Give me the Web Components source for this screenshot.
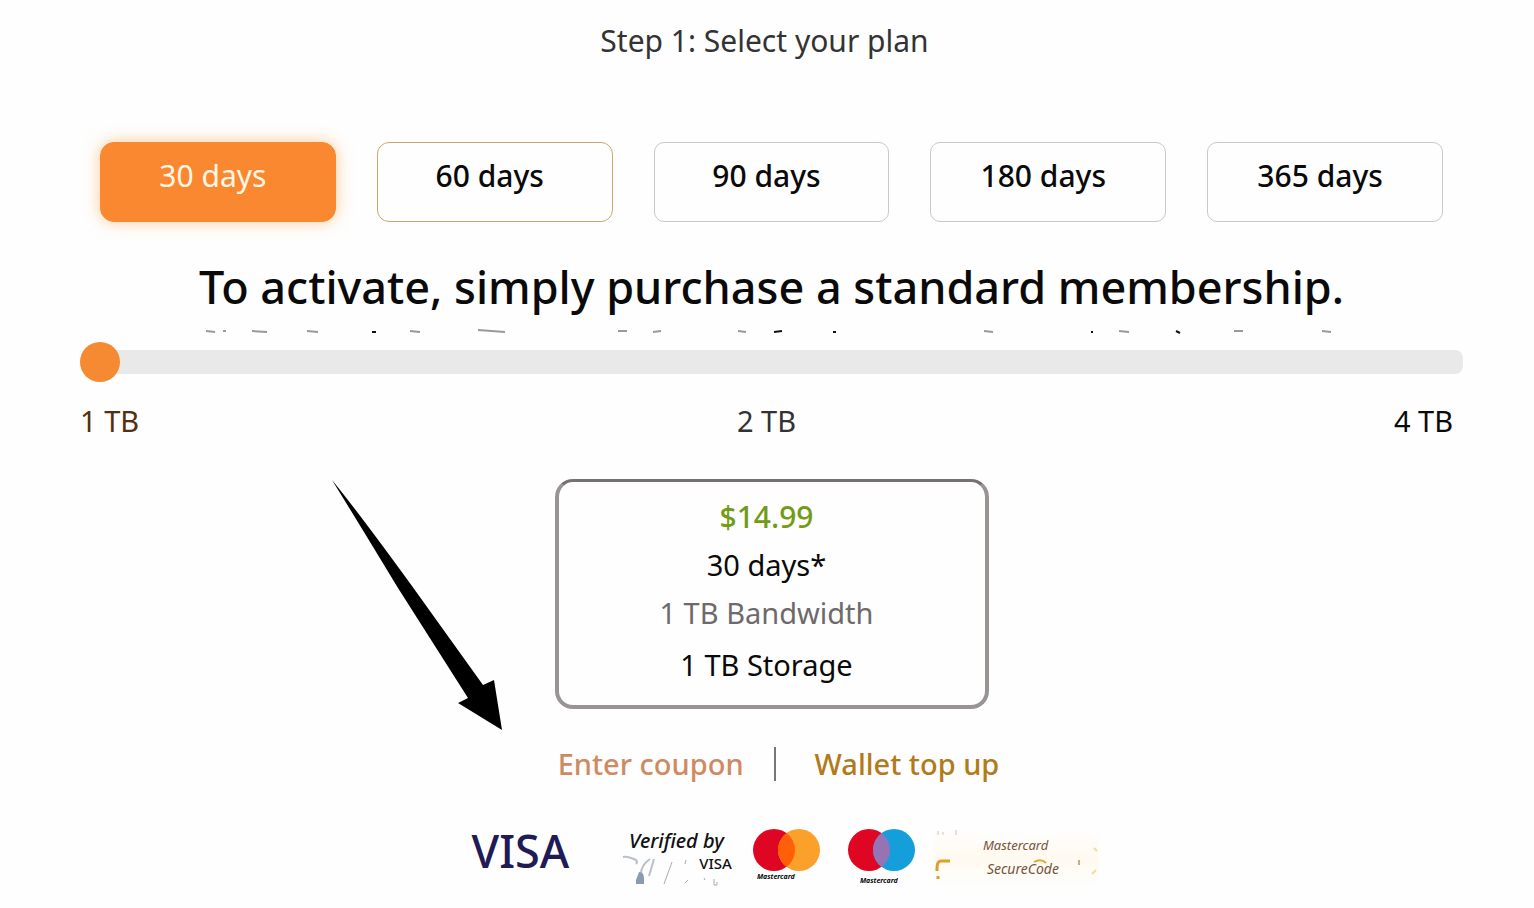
<!DOCTYPE html>
<html lang="en">
<head>
<meta charset="utf-8">
<meta name="viewport" content="width=device-width, initial-scale=1">
<title>Select your plan</title>
<style>
body { margin: 0; background: #fefefe; color: #0a0a0a; font: 30px/40px "Noto Sans", "Open Sans", sans-serif; }
</style>
</head>
<body>
<plan-page></plan-page>
<script>
function define(name, html) {
  const template = document.createElement('template');
  template.innerHTML = html;
  customElements.define(name, class extends HTMLElement {
    constructor() {
      super();
      this.attachShadow({ mode: 'open' }).append(template.content.cloneNode(true));
    }
  });
}

define('plan-option', `
<style>
:host { display: block; }
button { box-sizing: border-box; width: 100%; height: 80px; padding: 0 10px 12px 0; font: inherit; font-weight: 500; color: #0a0a0a;
  background: #fefefe; border: 1px solid #c9c9c9; border-radius: 10px; cursor: pointer; }
:host([tone="gold"]) button { border-color: #c9aa6c; border-radius: 12px; }
:host([selected]) button { color: #fff7e6; background: #f98830; border-color: #f98830; border-radius: 14px; font-weight: 400;
  box-shadow: 0 0 16px rgba(249, 170, 80, .6); }
</style>
<button type="button"><slot></slot></button>`);

define('plan-picker', `
<style>
:host { display: grid; grid-template-columns: repeat(5, 1fr); gap: 41px; padding: 0 20px; }
</style>
<slot></slot>`);

define('storage-slider', `
<style>
:host { display: block; }
input { appearance: none; display: block; width: 100%; height: 40px; margin: 0; background: none; }
input::-webkit-slider-runnable-track { height: 24px; background: #e9e9e9; border-radius: 12px 8px 8px 12px; }
input::-webkit-slider-thumb { appearance: none; width: 40px; height: 40px; margin-top: -8px; border-radius: 50%; background: #f68a33; }
.marks { display: flex; justify-content: space-between; padding: 19px 10px 0 0; font-size: 29px; }
.marks :first-child { color: #54300f; }
.marks :nth-child(2) { color: #333; }
</style>
<input type="range" min="1" max="4" value="1" aria-label="Storage in TB">
<div class="marks"><span>1 TB</span><span>2 TB</span><span>4 TB</span></div>`);

define('text-remnants', `
<style>
:host { display: block; }
svg { display: block; width: 100%; height: 5px; }
</style>
<svg viewBox="0 0 1383 5" preserveAspectRatio="none" fill="none" stroke-width="2" aria-hidden="true">
<path stroke="#999" d="M126 2l9 1M143 2h3M172 2l15 1M227 2l11 1M330 2l10 1M398 1l27 2M538 2h9M573 3l8-1M658 2l8 1M904 2l9 1M1039 2l10 1M1154 2h9M1242 2l9 1"/>
<path stroke="#111" d="M292 3h4M694 3l8-1M753 3h3M1011 3h2M1096 2l4 2"/>
</svg>`);

define('plan-summary', `
<style>
:host { box-sizing: border-box; display: block; width: 434px; height: 230px; margin: 0 auto; padding: 15px 10px 0 0; text-align: center;
  border: 4px solid #999393; border-top: 3px solid #777070; border-radius: 18px; background: #fefefe; }
p { margin: 0 0 8px; font-size: 29px; }
.price { color: #729b16; font-size: 30px; font-weight: 500; }
.bandwidth { color: #6e6a6c; margin-bottom: 12px; }
</style>
<p class="price">$14.99</p>
<p>30 days*</p>
<p class="bandwidth">1 TB Bandwidth</p>
<p>1 TB Storage</p>`);

define('plan-links', `
<style>
:host { display: flex; justify-content: center; align-items: center; gap: 30px; padding-left: 14px; }
a { color: #cf8a63; text-decoration: none; font-size: 29px; font-weight: 500; }
a.wallet { color: #b37a1c; margin-left: 9px; }
i { width: 2px; height: 34px; background: #777; }
</style>
<a href="#coupon">Enter coupon</a><i></i><a class="wallet" href="#wallet">Wallet top up</a>`);

define('card-circles', `
<style>
:host { display: block; width: 68px; font: italic bold 7px/10px "Noto Sans", sans-serif; }
svg { display: block; width: 68px; height: 44px; }
span { display: block; padding-left: 5px; }
:host([kind="maestro"]) span { padding: 4px 0 0 13px; }
.right, .overlap { fill: #faa02b; }
.overlap { fill: #ff5f08; }
:host([kind="maestro"]) .right { fill: #149fdb; }
:host([kind="maestro"]) .overlap { fill: #9673b5; }
</style>
<svg viewBox="0 0 68 44" aria-hidden="true"><circle cx="22" cy="22" r="21" fill="#df0623"/><circle class="right" cx="47" cy="22" r="21"/><path class="overlap" d="M34.500 5.100A21 21 0 0 1 34.500 38.900A21 21 0 0 1 34.500 5.100Z"/></svg>
<span><slot></slot></span>`);

define('payment-logos', `
<style>
:host { display: flex; align-items: flex-start; width: 656px; margin: 0 auto; font-style: italic; }
.visa { width: 150px; padding-left: 28px; box-sizing: border-box; font: 500 45px/46px "Noto Sans", sans-serif; color: #211b55; }
.verified { position: relative; box-sizing: border-box; width: 159px; padding: 2px 28px 0 20px; display: flex; flex-direction: column; align-items: flex-end; color: #101014; }
.verified b { font: italic 500 20px/22px "Noto Sans", sans-serif; white-space: nowrap; }
.verified small { margin-right: -8px; font: 500 15px/22px "Noto Sans", sans-serif; }
.verified svg { position: absolute; left: 18px; top: 0; width: 120px; height: 64px; }
card-circles { margin-right: 27px; }
.secure { position: relative; width: 166px; height: 60px; margin-left: -8px; background: linear-gradient(#fefefe, #fffaf0, #fefefe); color: #73533a; font-size: 13px; line-height: 24px; }
.secure svg { position: absolute; inset: 0; width: 166px; height: 60px; }
.secure div { padding: 5px 0 0 49px; }
.secure span { display: block; }
.secure span + span { padding-left: 4px; font-size: 14px; }
</style>
<div class="visa">VISA</div>
<div class="verified">
<svg viewBox="0 0 120 64" aria-hidden="true" fill="none"><path stroke="#b9c0ca" stroke-width="2" d="M12 29q4-1 13 3q2 2 0 4M39 31q-9 6-9 15M43 31l-5 17"/><path fill="#8d9bb0" d="M28 44q5 0 5 6v6h-8v-4z"/><path stroke="#aaa" d="M61 34l-8 22M75 32l-1 4M77 52l-3 3M93 50l1 2M103 51v6h3v-3"/></svg>
<b>Verified by</b><small>VISA</small>
</div>
<card-circles>Mastercard</card-circles>
<card-circles kind="maestro">Mastercard</card-circles>
<div class="secure">
<svg viewBox="0 0 166 60" aria-hidden="true" fill="none"><path stroke="#d9a02b" stroke-width="3" d="M16 33h-9q-4 0-4 7v3M4 48v3"/><path stroke="#e6a735" stroke-width="2" d="M100 34q7-4 12 1"/><path stroke="#d5c4b4" d="M4 3v4M9 4v3M22 2v5"/><path stroke="#d9a48d" stroke-width="2" d="M145 32v5"/><path stroke="#f1dba5" stroke-width="2" d="M160 20l3 3M158 46l4-4"/></svg>
<div><span>Mastercard</span><span>SecureCode</span></div>
</div>`);

define('pointer-arrow', `
<style>
:host { position: absolute; left: 252px; top: 0; width: 172px; height: 252px; pointer-events: none; }
svg { display: block; width: 172px; height: 252px; }
</style>
<svg viewBox="0 0 172 252" aria-hidden="true"><path d="M0 1Q27 34 80 107L151 206L162 201L170 251L126 224L136 219L66 109Q26 43 0 1Z"/></svg>`);

define('plan-page', `
<style>
:host { display: block; padding: 21px 71px 20px 80px; }
h1, h2 { margin: 0; text-align: center; }
h1 { padding-right: 14px; font-size: 30px; font-weight: 400; line-height: 40px; color: #333; }
plan-picker { margin-top: 81px; }
h2 { margin-top: 35px; font-size: 45px; font-weight: 500; line-height: 60px; white-space: nowrap; }
text-remnants { margin-top: 12px; }
storage-slider { margin-top: 8px; }
.summary { position: relative; margin-top: 38px; }
plan-links { margin-top: 35px; }
payment-logos { margin-top: 44px; }
</style>
<h1>Step 1: Select your plan</h1>
<plan-picker>
<plan-option selected>30 days</plan-option>
<plan-option tone="gold">60 days</plan-option>
<plan-option>90 days</plan-option>
<plan-option>180 days</plan-option>
<plan-option>365 days</plan-option>
</plan-picker>
<h2>To activate, simply purchase a standard membership.</h2>
<text-remnants></text-remnants>
<storage-slider></storage-slider>
<div class="summary"><plan-summary></plan-summary><pointer-arrow></pointer-arrow></div>
<plan-links></plan-links>
<payment-logos></payment-logos>`);
</script>
</body>
</html>
